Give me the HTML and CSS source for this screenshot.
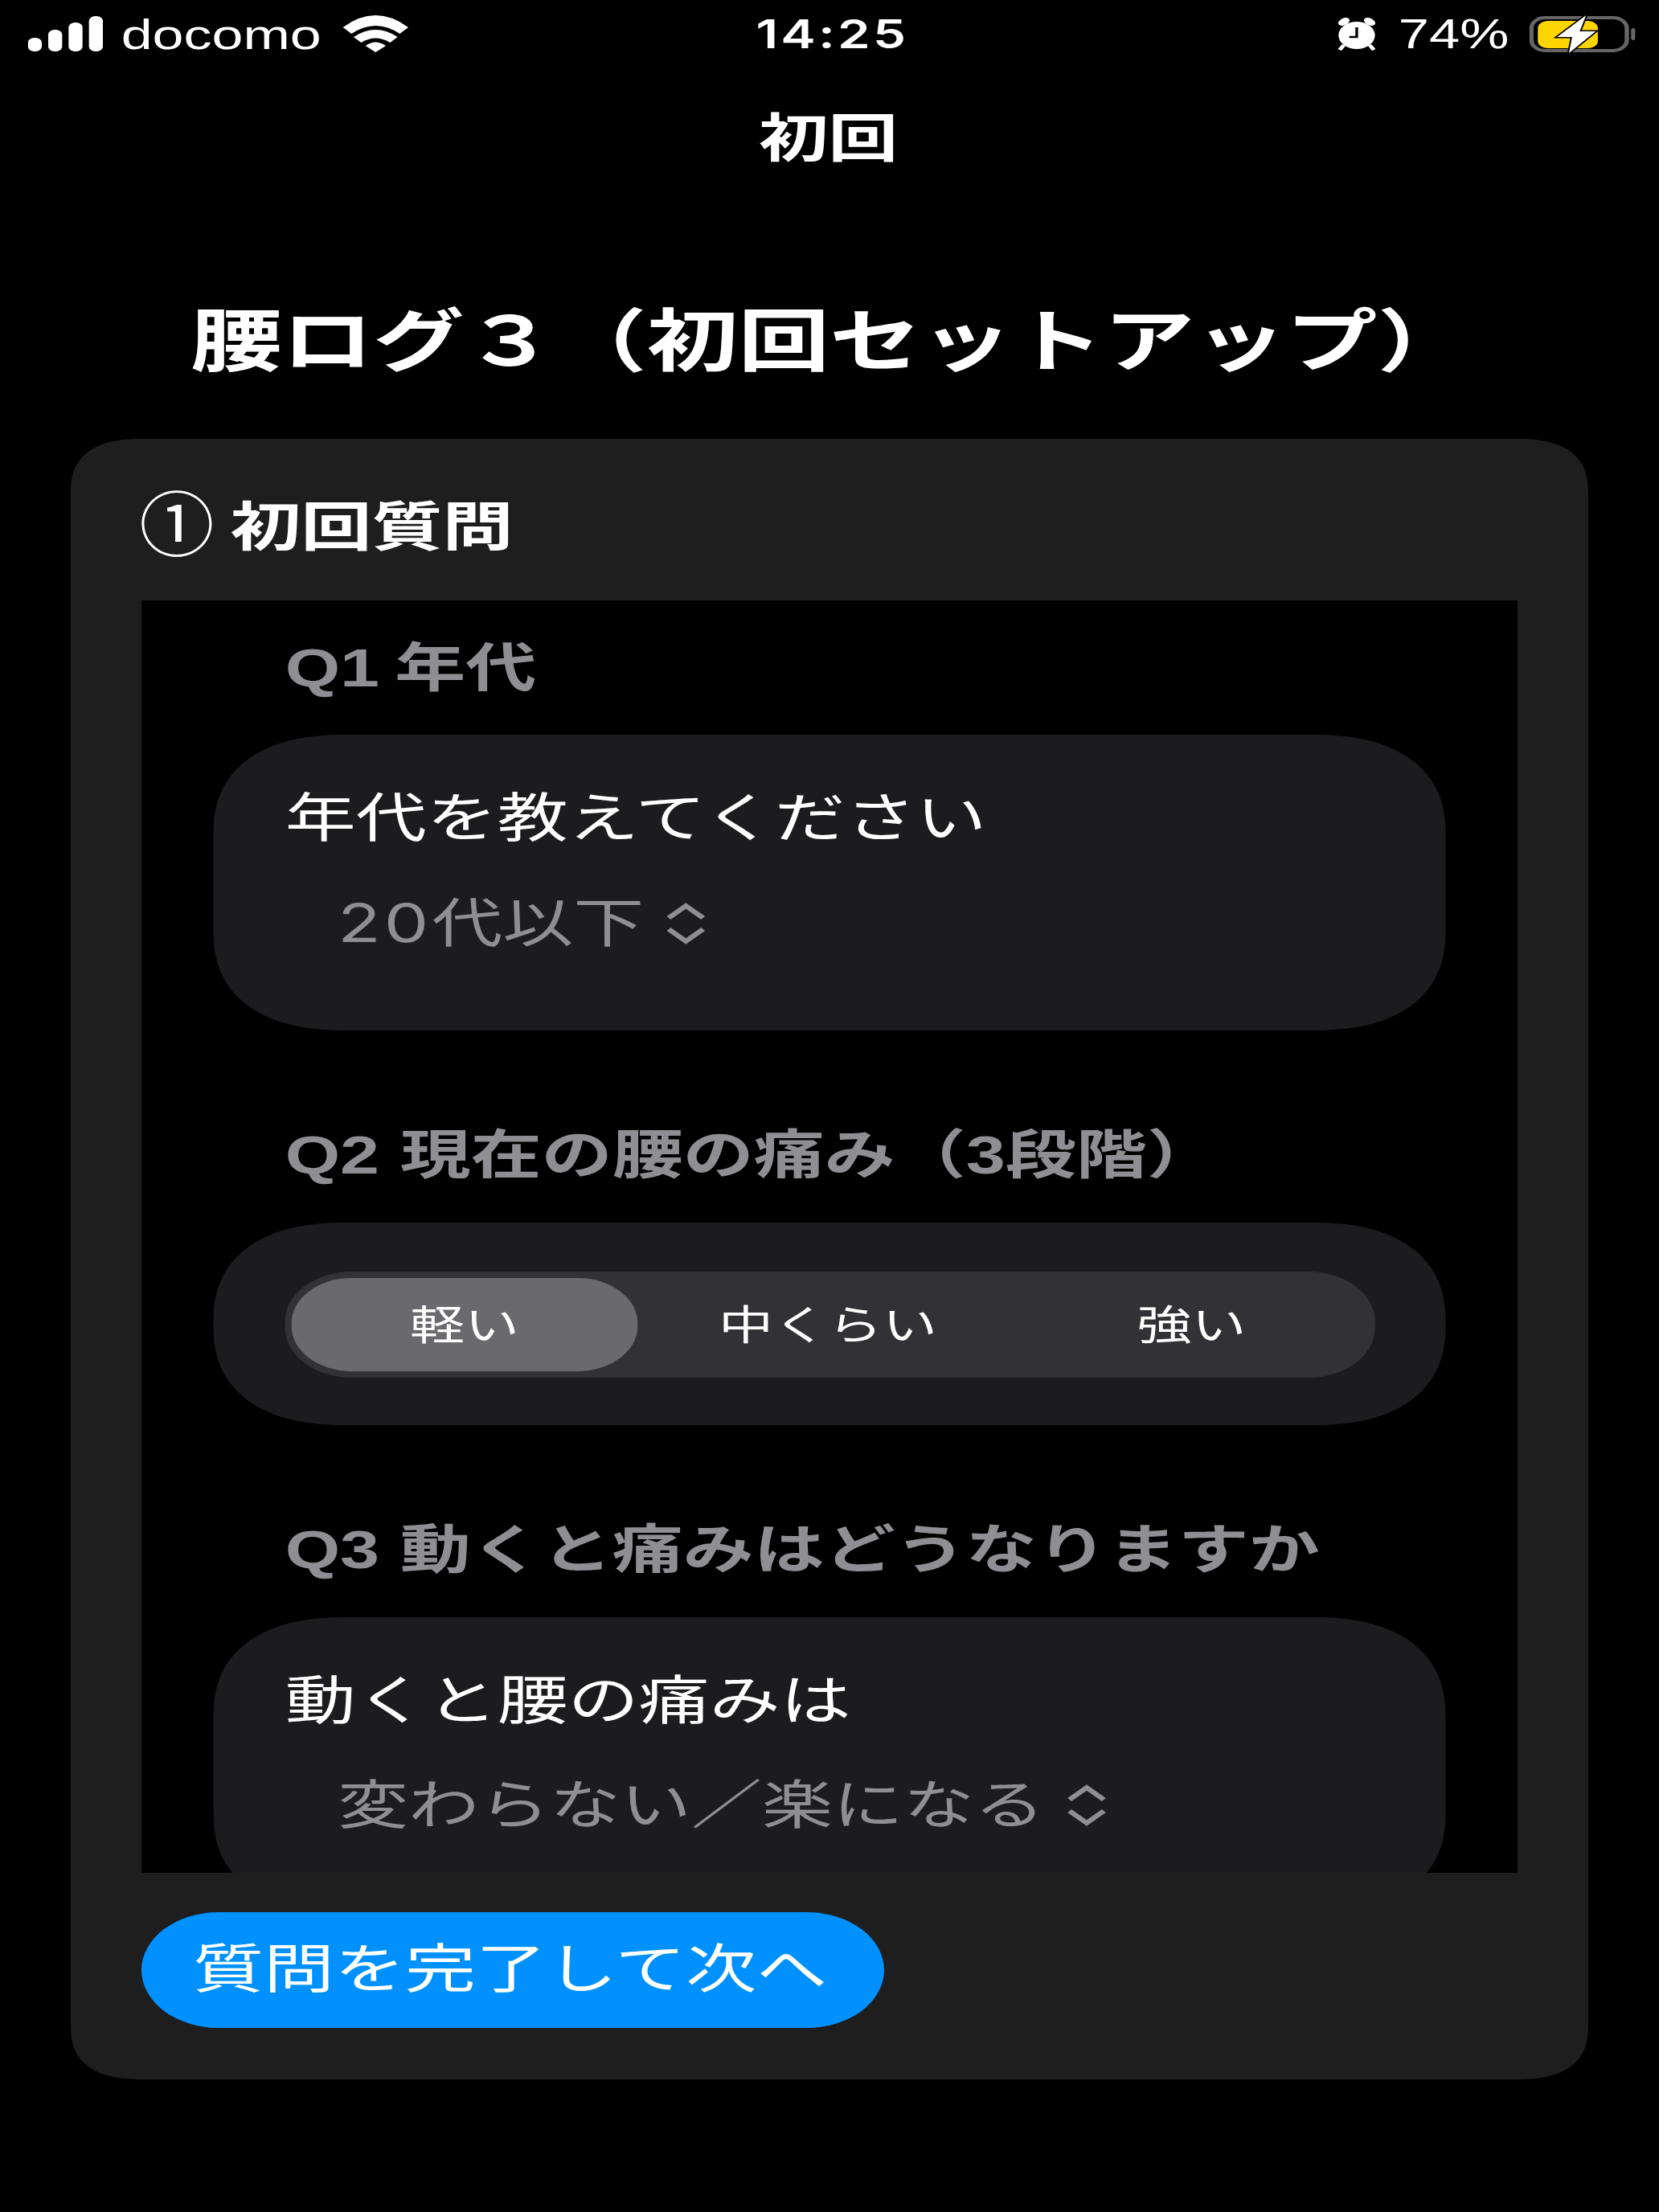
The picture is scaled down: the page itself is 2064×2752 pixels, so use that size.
FILE: index.html
```html
<!DOCTYPE html>
<html lang="ja">
<head>
  <meta charset="UTF-8" />
  <title>腰ログ3</title>
  <link rel="stylesheet" href="styles.css">
</head>
<body>
  <!-- The capture is stretched sideways, so the whole screen is scaled on x -->
  <div class="screen">

    <div class="status-bar">
      <div class="status-left">
        <svg class="icon-signal" viewBox="0 0 70 44">
          <rect x="0" y="27" width="13" height="17" rx="6" />
          <rect x="19" y="17" width="13" height="27" rx="6" />
          <rect x="38" y="8" width="13" height="36" rx="6" />
          <rect x="57" y="0" width="13" height="44" rx="6" />
        </svg>
        <span class="carrier">docomo</span>
        <svg class="icon-wifi" viewBox="0 0 61 46">
          <path d="M0 15 Q30.5 -15 61 15 L53 23 Q30.5 3 8 23 Z" />
          <path d="M10 27 Q30.5 9 51 27 L44 34 Q30.5 23 17 34 Z" />
          <path d="M21 38 Q30.5 29 40 38 L30.5 46 Z" />
        </svg>
      </div>
      <div class="status-time">14:25</div>
      <div class="status-right">
        <svg class="icon-alarm" viewBox="0 0 38 41">
          <ellipse cx="7" cy="5" rx="6" ry="4" transform="rotate(-40 7 5)" />
          <ellipse cx="31" cy="5" rx="6" ry="4" transform="rotate(40 31 5)" />
          <circle cx="19" cy="22" r="17" />
          <path class="feet" d="M7 34 L3 40 M31 34 L35 40" />
          <path class="hands" d="M19 12 V24 H12" />
        </svg>
        <span class="battery-pct">74%</span>
        <svg class="icon-battery" viewBox="0 0 99 47">
          <rect class="shell" x="2" y="3" width="89" height="41" rx="13" />
          <rect class="level" x="8" y="7" width="56" height="34" rx="9" />
          <rect class="nub" x="95" y="16" width="4" height="15" rx="2" />
          <path class="bolt" d="M53 0 L26 27 L40 27 L37 47 L62 20 L47 20 Z" />
        </svg>
      </div>
    </div>

    <div class="nav-title">初回</div>

    <h1 class="page-title">腰ログ３（初回セットアップ）</h1>

    <div class="card">
      <h2 class="card-title"><span class="circled">①</span> 初回質問</h2>

      <div class="list">
        <h3 class="q-label">Q1 年代</h3>
        <div class="group">
          <div class="row">年代を教えてください</div>
          <div class="row picker">
            <span><span class="digits">20</span>代以下</span>
            <svg class="chevrons" viewBox="0 0 40 54"><path d="M4 20 L20 5 L36 20 M4 34 L20 49 L36 34" /></svg>
          </div>
        </div>

        <h3 class="q-label">Q2 現在の腰の痛み（3段階）</h3>
        <div class="group group-seg">
          <div class="segmented">
            <div class="seg selected">軽い</div>
            <div class="seg">中くらい</div>
            <div class="seg">強い</div>
          </div>
        </div>

        <h3 class="q-label">Q3 動くと痛みはどうなりますか</h3>
        <div class="group">
          <div class="row">動くと腰の痛みは</div>
          <div class="row picker">
            <span>変わらない／楽になる</span>
            <svg class="chevrons" viewBox="0 0 40 54"><path d="M4 20 L20 5 L36 20 M4 34 L20 49 L36 34" /></svg>
          </div>
        </div>
      </div>

      <button class="next-btn">質問を完了して次へ</button>
    </div>

  </div>
</body>
</html>
```

FILE: styles.css
```css
html, body {
  margin: 0;
  height: 2752px;
  overflow: hidden;
  background: #000;
}

body {
  font-family: "Liberation Sans", "Noto Sans CJK JP", sans-serif;
  color: #fff;
}

.screen {
  width: 1548px;
  height: 2752px;
  transform: scaleX(1.3333);
  transform-origin: 0 0;
}

/* Status bar */
.status-bar {
  display: grid;
  grid-template-columns: 1fr auto 1fr;
  align-items: center;
  height: 84px;
}

.status-left, .status-right {
  display: flex;
  align-items: center;
}

.status-left { padding-left: 26px; }
.status-right { justify-content: flex-end; padding-right: 22px; }

.status-bar svg { fill: #fff; display: block; }

.icon-signal { width: 70px; height: 44px; margin-right: 17px; }
.icon-wifi { width: 61px; height: 46px; margin-left: 20px; }
.icon-alarm { width: 38px; height: 41px; margin-right: 20px; }
.icon-battery { width: 99px; height: 47px; margin-left: 19px; }

.carrier { font-size: 52.5px; }
.battery-pct { font-size: 51.5px; }

.status-time {
  font-family: Inter, "Liberation Sans", sans-serif;
  font-size: 49px;
  font-weight: 600;
  letter-spacing: 2.4px;
  padding-left: 5px;
}

.icon-alarm .feet { stroke: #fff; stroke-width: 4; fill: none; }
.icon-alarm .hands { stroke: #000; stroke-width: 2.5; fill: none; }

.icon-battery .shell { fill: none; stroke: #666; stroke-width: 4; }
.icon-battery .level { fill: #ffd500; }
.icon-battery .nub { fill: #666; }
.icon-battery .bolt { stroke: #000; stroke-width: 3; paint-order: stroke; }

/* Titles */
.nav-title {
  height: 178px;
  line-height: 178px;
  padding-right: 2px;
  text-align: center;
  font-size: 65px;
  font-weight: 700;
}

.page-title {
  margin: 114px 0 70px;
  font-size: 85.2px;
  line-height: 100px;
  font-weight: 700;
  text-align: center;
}

/* Card */
.card {
  width: 1416px;
  margin-left: 66px;
  padding: 0 66px 65px;
  box-sizing: border-box;
  height: 2041px;
  background: #1e1e1e;
  border-radius: 66px;
  corner-shape: superellipse(1.3);
}

.card-title {
  margin: 0;
  padding: 59px 0 41px;
  font-size: 66px;
  line-height: 100px;
  font-weight: 700;
}

.circled {
  display: inline-block;
  margin-left: -2px;
  font-size: 70px;
  font-weight: 400;
  letter-spacing: -3.5px;
  transform: scaleY(1.25);
}

.list {
  height: 1583px;
  overflow: hidden;
  padding: 0 67px;
  box-sizing: border-box;
  background: #000;
}

.q-label {
  margin: 0 0 44px 67px;
  font-size: 66px;
  line-height: 80px;
  font-weight: 700;
  word-spacing: 1px;
  color: #8e8e93;
}

.list .q-label:first-child {
  margin: 44px 0 43px 67px;
  word-spacing: -4px;
}

.group {
  background: #1c1c1e;
  border-radius: 125px;
  corner-shape: superellipse(1.25);
  padding: 39px 67px 68px;
  margin-bottom: 115px;
}

.row {
  font-size: 66px;
  line-height: 130px;
}

.picker {
  display: flex;
  align-items: center;
  gap: 19px;
  padding-left: 49px;
  color: #8e8e93;
}

.digits {
  font-family: Inter, "Liberation Sans", sans-serif;
  letter-spacing: 3px;
}

.chevrons {
  width: 40px;
  height: 54px;
  fill: none;
  stroke: #8e8e93;
  stroke-width: 5.5;
}

/* Segmented control */
.group-seg {
  display: flex;
  align-items: center;
  height: 252px;
  padding: 1px 66px 0 67px;
  box-sizing: border-box;
}

.segmented {
  display: grid;
  grid-template-columns: repeat(3, 1fr);
  flex: 1;
  height: 132px;
  padding: 8px 6px;
  box-sizing: border-box;
  background: #323236;
  border-radius: 62px;
}

.seg {
  display: flex;
  align-items: center;
  justify-content: center;
  padding-bottom: 5px;
  font-size: 51px;
}

.seg:nth-child(2) { padding-right: 4px; }
.seg:last-child { padding-left: 5px; }

.seg.selected {
  margin-right: 12px;
  background: #69696e;
  border-radius: 56px;
}

/* Button */
.next-btn {
  display: block;
  width: 693px;
  height: 144px;
  margin-top: 49px;
  padding: 0 5px 14px 0;
  border: none;
  border-radius: 72px;
  background: #0091ff;
  color: #fff;
  font-family: inherit;
  font-size: 66px;
}
```
